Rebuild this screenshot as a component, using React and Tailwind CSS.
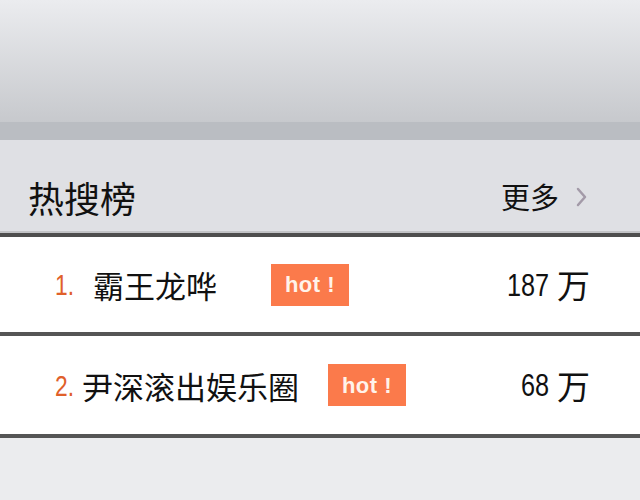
import React from 'react';

const cjk = "font-['Noto_Sans_CJK_SC',sans-serif]";
const digits = "font-['Liberation_Sans',sans-serif]";

const items = [
  { rank: 1, title: '霸王龙哗', count: '187', countW: 'w-[43px]', gap: 'ml-[19px]', badgeGap: 'ml-[54px]' },
  { rank: 2, title: '尹深滚出娱乐圈', count: '68', countW: 'w-[29px]', gap: 'ml-[8px]', badgeGap: 'ml-[29px]' },
];

function HotBadge() {
  return (
    <span className="flex h-[42px] w-[78px] items-center justify-center bg-[#fb7a4b] font-['Liberation_Sans',sans-serif] text-[22px] font-bold tracking-[0.5px] text-[#fff3ea]">
      hot !
    </span>
  );
}

function Row({ item, height }) {
  return (
    <div className={`flex ${height} items-center bg-white pl-[55px] pr-[50px]`}>
      <span className="inline-block w-[19px] whitespace-nowrap">
        <span className={`inline-block origin-left scale-x-[0.76] ${digits} text-[30px] text-[#e0602a]`}>
          {item.rank}.
        </span>
      </span>
      <span className={`${item.gap} ${cjk} text-[31px] leading-none text-[#111]`}>{item.title}</span>
      <span className={item.badgeGap}>
        <HotBadge />
      </span>
      <span className="ml-auto flex items-center text-[#111]">
        <span className={`inline-block ${item.countW} whitespace-nowrap`}>
          <span className={`inline-block origin-left scale-x-[0.79] ${digits} text-[32px]`}>{item.count}</span>
        </span>
        <span className={`ml-[7px] ${cjk} text-[33px] leading-none`}>万</span>
      </span>
    </div>
  );
}

export default function App() {
  return (
    <div className="flex h-[500px] w-[640px] flex-col overflow-hidden bg-[#ebecee]">
      {/* top blurred bar */}
      <div className="h-[122px] bg-gradient-to-b from-[#ebecef] to-[#c7c9cd]" />
      <div className="h-[18px] bg-[#babdc2]" />

      {/* header */}
      <div className="flex h-[91px] items-center bg-[#dfe0e4] pl-[28px] pr-[52px] pt-[22px]">
        <span className={`${cjk} text-[36px] leading-none text-[#111]`}>热搜榜</span>
        <span className={`ml-auto ${cjk} text-[29px] leading-none text-[#111]`}>更多</span>
        <svg className="ml-[17px]" width="12" height="20" viewBox="0 0 12 20" fill="none">
          <path d="M2 2l7 8-7 8" stroke="#a39aa8" strokeWidth="2.5" strokeLinecap="round" strokeLinejoin="round" />
        </svg>
      </div>
      <div className="h-[2px] bg-[#c2c3c6]" />
      <div className="h-[4px] bg-[#4e4e4e]" />

      <Row item={items[0]} height="h-[95px]" />
      <div className="h-[4px] bg-[#555555]" />
      <Row item={items[1]} height="h-[98px]" />
      <div className="h-[4px] bg-[#555555]" />

      <div className="flex-1 bg-[#ebecee]" />
    </div>
  );
}
